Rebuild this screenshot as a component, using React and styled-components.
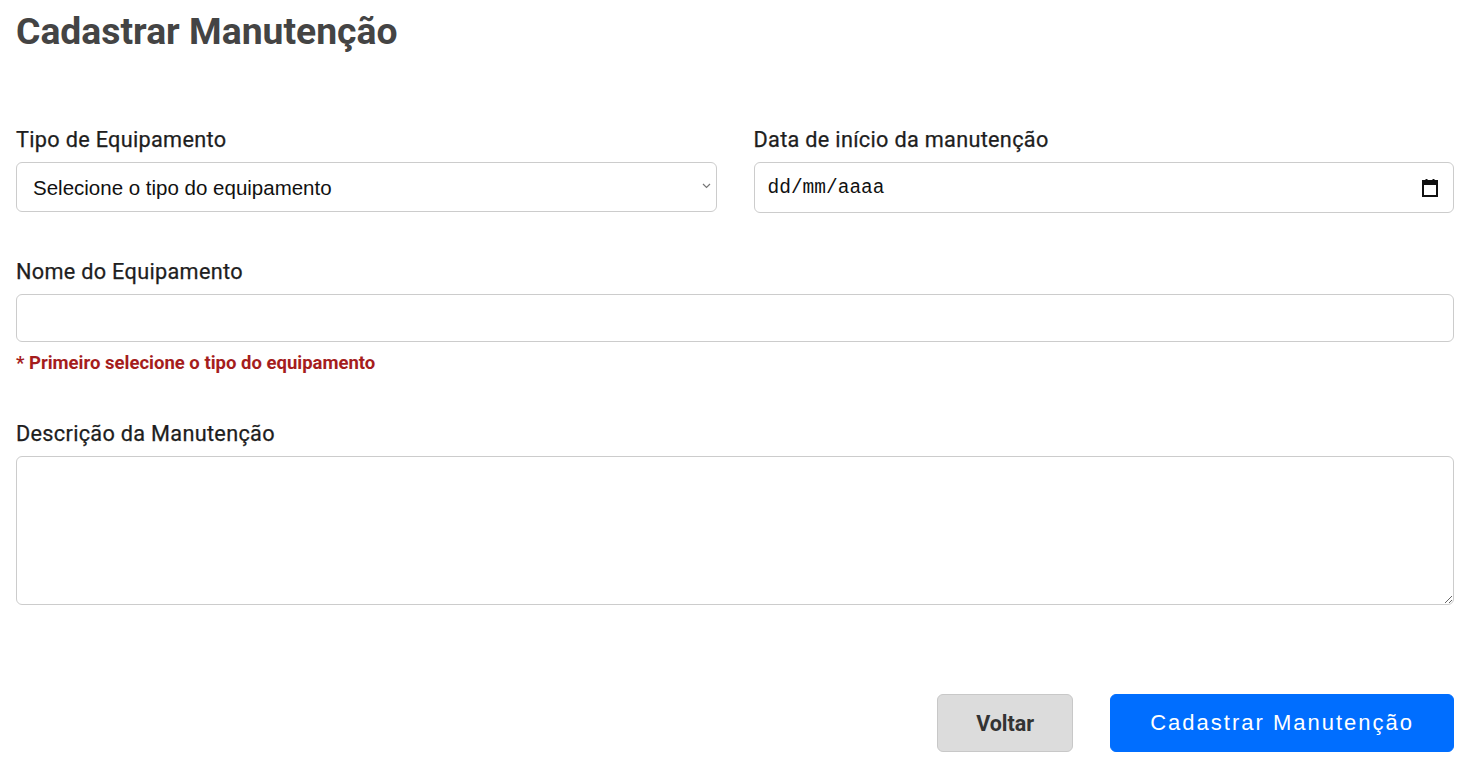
import React from "react";
import styled, { createGlobalStyle } from "styled-components";

const GlobalStyle = createGlobalStyle`
  * { box-sizing: border-box; }
  body {
    margin: 0;
    background: #fff;
    font-family: Roboto, "Liberation Sans", sans-serif;
  }
`;

const Page = styled.div`
  padding: 8px 15px 0 16px;
`;

const Title = styled.h1`
  margin: 0;
  font-size: 37.3px;
  font-weight: 700;
  color: #444;
  line-height: 46px;
`;

const Form = styled.form`
  margin-top: 74px;
  display: flex;
  flex-direction: column;
`;

const Row = styled.div`
  display: grid;
  grid-template-columns: 1fr 1fr;
  gap: 37px;
`;

const Field = styled.div`
  display: flex;
  flex-direction: column;
  margin-bottom: ${(props) => props.spacing || "0"};
`;

const Label = styled.label`
  font-size: 21.7px;
  font-weight: 400;
  letter-spacing: 0.3px;
  color: #1e1e1e;
  -webkit-text-stroke: 0.25px #1e1e1e;
  line-height: 24px;
  margin-bottom: 10px;
`;

const SelectWrap = styled.div`
  position: relative;
`;

const Select = styled.select`
  width: 100%;
  height: 50px;
  padding: 0 16px;
  border: 1px solid #ccc;
  border-radius: 6px;
  background: #fff;
  appearance: none;
  font-family: "Liberation Sans", Arial, sans-serif;
  font-size: 20.5px;
  color: #111;
`;

const Chevron = styled.svg`
  position: absolute;
  right: 6px;
  top: 21px;
  pointer-events: none;
`;

const DateBox = styled.div`
  height: 51px;
  display: flex;
  align-items: center;
  justify-content: space-between;
  padding: 0 14px 0 13px;
  border: 1px solid #ccc;
  border-radius: 6px;
`;

const DateText = styled.input`
  border: none;
  outline: none;
  padding: 0;
  flex: 1;
  font-family: "Liberation Mono", "DejaVu Sans Mono", monospace;
  font-size: 19.5px;
  color: #111;
  &::placeholder { color: #111; }
`;

const Input = styled.input`
  height: 48px;
  padding: 0 14px;
  border: 1px solid #ccc;
  border-radius: 6px;
  font-size: 18px;
`;

const Hint = styled.span`
  margin-top: 10px;
  font-size: 18.5px;
  font-weight: 700;
  color: #a51d1d;
`;

const TextArea = styled.textarea`
  height: 149px;
  padding: 12px 14px;
  border: 1px solid #ccc;
  border-radius: 6px;
  font-size: 18px;
  resize: vertical;
`;

const Actions = styled.div`
  display: flex;
  justify-content: flex-end;
  gap: 37px;
  margin-top: 89px;
`;

const Button = styled.button`
  height: 58px;
  padding: 0 ${(props) => (props.primary ? "39px" : "38px")};
  border-radius: 6px;
  border: 1px solid ${(props) => (props.primary ? "#006eff" : "#c8c8c8")};
  background: ${(props) => (props.primary ? "#006eff" : "#dcdcdc")};
  color: ${(props) => (props.primary ? "#fff" : "#333")};
  font-family: ${(props) => (props.primary ? '"Liberation Sans", Arial, sans-serif' : "Roboto, sans-serif")};
  font-size: ${(props) => (props.primary ? "22px" : "21.5px")};
  font-weight: ${(props) => (props.primary ? 400 : 700)};
  letter-spacing: ${(props) => (props.primary ? "2px" : "0")};
  cursor: pointer;
`;

const CalendarIcon = () => (
  <svg width="18" height="20" viewBox="0 0 18 20" fill="none">
    <rect x="2" y="3" width="14" height="15" stroke="#111" strokeWidth="2" />
    <rect x="2" y="3" width="14" height="4" fill="#111" />
    <rect x="4.5" y="1" width="2" height="3" fill="#111" />
    <rect x="11.5" y="1" width="2" height="3" fill="#111" />
  </svg>
);

export default function App() {
  return (
    <>
      <GlobalStyle />
      <Page>
        <Title>Cadastrar Manutenção</Title>
        <Form onSubmit={(e) => e.preventDefault()}>
          <Row>
            <Field spacing="47px">
              <Label>Tipo de Equipamento</Label>
              <SelectWrap>
                <Select defaultValue="">
                  <option value="">Selecione o tipo do equipamento</option>
                </Select>
                <Chevron width="9" height="6" viewBox="0 0 9 6" fill="none">
                  <path d="M1 1l3.5 3.5L8 1" stroke="#777" strokeWidth="1.2" />
                </Chevron>
              </SelectWrap>
            </Field>
            <Field spacing="47px">
              <Label>Data de início da manutenção</Label>
              <DateBox>
                <DateText placeholder="dd/mm/aaaa" />
                <CalendarIcon />
              </DateBox>
            </Field>
          </Row>
          <Field spacing="48px">
            <Label>Nome do Equipamento</Label>
            <Input />
            <Hint>* Primeiro selecione o tipo do equipamento</Hint>
          </Field>
          <Field>
            <Label>Descrição da Manutenção</Label>
            <TextArea />
          </Field>
          <Actions>
            <Button type="button">Voltar</Button>
            <Button primary type="submit">Cadastrar Manutenção</Button>
          </Actions>
        </Form>
      </Page>
    </>
  );
}
